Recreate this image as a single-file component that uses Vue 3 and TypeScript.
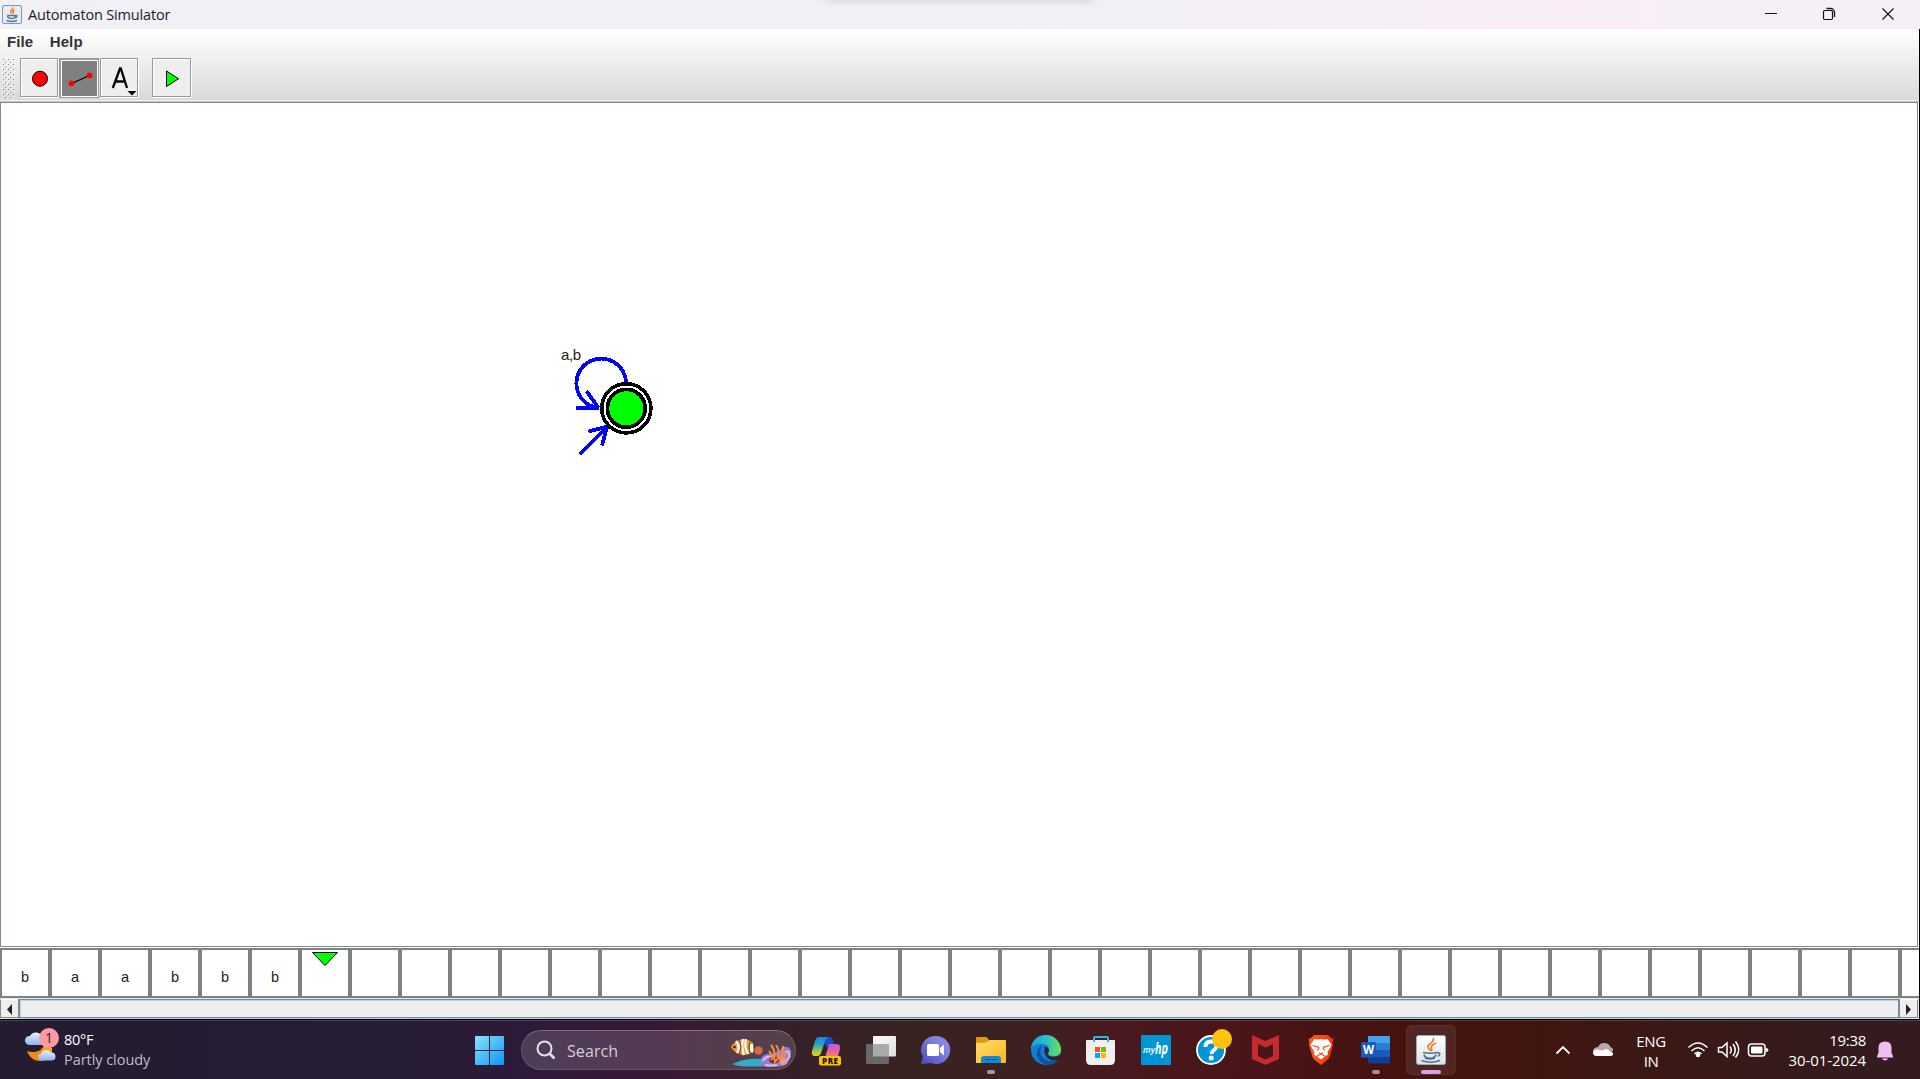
<script setup lang="ts">
interface TapeCell {
  symbol: string
  head: boolean
}

const input = ['b', 'a', 'a', 'b', 'b', 'b']
const headIndex = 6
const tape: TapeCell[] = Array.from({ length: 39 }, (_, i) => ({
  symbol: input[i] ?? '',
  head: i === headIndex,
}))
</script>

<template>
  <div class="screen">
    <header class="titlebar">
      <svg class="app-icon" width="22" height="22" viewBox="1 3 22 22">
        <rect x="2.5" y="4.5" width="19" height="18" rx="1.5" fill="#e6ecf2" stroke="#8097ab" />
        <path d="M12.500 6.500c2 2-4 3-1 6M14.500 9c-2 1-2 2-1 4" fill="none" stroke="#e8853a" stroke-width="1.500" />
        <path d="M7.500 14.500h8c0 4-8 4-8 0M15.500 14.500q3 0 0 2.500M6.500 19.500q5 2 10.500 0" fill="none" stroke="#557896" stroke-width="1.400" />
      </svg>
      <span class="title">Automaton Simulator</span>
      <div class="notch"></div>
      <svg class="win-controls" width="155" height="29" viewBox="1765 0 155 29" fill="none" stroke="#151515">
        <path d="M1765 13.500h12" />
        <path d="M1826.500 8.500h4a4 4 0 0 1 4 4v4.500" stroke-width="1.300" />
        <rect x="1823.500" y="10.500" width="9" height="9" rx="1.200" stroke-width="1.200" />
        <path d="M1882.500 8.500l11 11M1893.500 8.500l-11 11" stroke-width="1.200" />
      </svg>
    </header>

    <div class="app">
      <div class="chrome">
        <nav class="menu"><span>File</span><span>Help</span></nav>
        <div class="toolbar">
          <svg class="grip" width="13" height="41" shape-rendering="crispEdges">
            <defs>
              <pattern id="bumps" width="5" height="5" patternUnits="userSpaceOnUse">
                <path d="M0 0h1v1H0zM2 3h1v1H2z" fill="#fff" />
                <path d="M1 1h1v1H1zM3 4h1v1H3z" fill="#7f909f" />
              </pattern>
            </defs>
            <rect width="13" height="41" fill="url(#bumps)" />
          </svg>
          <button class="tool">
            <svg width="36" height="37" viewBox="21 59 36 37"><circle cx="40" cy="78.700" r="7.500" fill="#f00" stroke="#000" /></svg>
          </button>
          <button class="tool selected">
            <svg width="37" height="37" viewBox="61 60 37 37">
              <path d="M71.500 83.500L89.500 75.500" stroke="#000" stroke-width="1.300" />
              <circle cx="71.500" cy="83.300" r="2.900" fill="#f00" /><circle cx="89.500" cy="75.300" r="2.900" fill="#f00" />
            </svg>
          </button>
          <button class="tool text-tool">
            <svg width="36" height="37" viewBox="101 59 36 37">
              <path d="M112.800 88L120 68.500h.8L127 88M115.300 81.500h9.500" fill="none" stroke="#000" stroke-width="2.300" />
              <path d="M127.500 91h9l-4.500 4.500z" />
            </svg>
          </button>
          <button class="tool run">
            <svg width="37" height="37" viewBox="153 59 37 37"><path d="M166.500 71v15.500l12-7.700z" fill="#0f0" stroke="#000" /></svg>
          </button>
        </div>
      </div>

      <main class="canvas">
        <svg width="1916" height="844" viewBox="1 103 1916 844" shape-rendering="crispEdges">
          <g fill="none" stroke="#00f" stroke-width="3.800">
            <path d="M626 384A24.800 24.800 0 1 0 589 405L597 408.500" />
            <path d="M576 408.300h23M586.500 391L598.500 408" />
            <path d="M579.500 454.500L607 427M588.500 431.500L607.500 426.500M602 445.500L607 427" />
          </g>
          <circle cx="626.300" cy="408.300" r="24.600" fill="#fff" stroke="#000" stroke-width="3.600" />
          <circle cx="626.300" cy="408.300" r="18.900" fill="#0f0" stroke="#000" stroke-width="3.800" />
          <text x="561" y="360" font-size="15" fill="#222" textLength="20">a,b</text>
        </svg>
      </main>

      <div class="tape">
        <div v-for="(cell, i) in tape" :key="i" class="cell">
          <svg v-if="cell.head" width="26" height="15" viewBox="0 0 26 15"><path d="M.5 .5h25L13 13.500z" fill="#0f0" stroke="#000" /></svg>
          <span v-else>{{ cell.symbol }}</span>
        </div>
      </div>

      <div class="scrollbar">
        <div class="arrow left"><svg width="5" height="11"><path d="M5 0v11L0 5.500z" fill="#222" /></svg></div>
        <div class="thumb"></div>
        <div class="arrow right"><svg width="5" height="11"><path d="M0 0v11L5 5.500z" fill="#222" /></svg></div>
      </div>
    </div>

    <footer class="taskbar">
      <div class="weather">
        <svg width="40" height="40" viewBox="22 1025 40 40">
          <defs><linearGradient id="cloud" x2="0" y2="1"><stop stop-color="#e9f2ff" /><stop offset="1" stop-color="#8fb2ee" /></linearGradient></defs>
          <path d="M27 1051c6 2 13 1 15-3l8-1c5 4 0 14-10 14-6 0-11-4-13-10z" fill="#f08a1c" />
          <path d="M44 1044l8 4v4h-10z" fill="#f6a623" />
          <path d="M29 1045a4.500 4.500 0 0 1 1-9 6.500 6.500 0 0 1 12 1v8z" fill="url(#cloud)" />
          <path d="M41 1060.500a3.600 3.600 0 0 1 0-7 6 6 0 0 1 10-1 4 4 0 0 1 1 8z" fill="url(#cloud)" />
          <circle cx="49" cy="1038" r="10" fill="#fe99a4" />
          <text x="49" y="1043" text-anchor="middle" font-size="14" fill="#3a2028">1</text>
        </svg>
        <div class="weather-text"><span class="temp">80°F</span><span class="sky">Partly cloudy</span></div>
      </div>

      <svg class="start" width="30" height="30" viewBox="0 0 30 30">
        <defs><linearGradient id="win" x2="1" y2="1"><stop stop-color="#8be3fb" /><stop offset="1" stop-color="#0a96f5" /></linearGradient></defs>
        <path d="M1 0h13v14H0V1a1 1 0 0 1 1-1zM15 0h13a1 1 0 0 1 1 1v13H15zM0 15h14v14H1a1 1 0 0 1-1-1zM15 15h14v13a1 1 0 0 1-1 1H15z" fill="url(#win)" />
      </svg>

      <div class="search">
        <svg width="20" height="20" viewBox="0 0 20 20" fill="none" stroke="#e8e0e8" stroke-width="2"><circle cx="8.500" cy="8.500" r="7" /><path d="M13.500 13.500l5 5" stroke-width="2.500" /></svg>
        <span>Search</span>
        <svg class="reef" width="62" height="32" viewBox="730 1036 62 32">
          <path d="M732.500 1064c9-5 21-6 32-5v7.500h-20c-5 0-9-1-12-2.500z" fill="#36aacb" />
          <path d="M731 1047c4-8 15-10 22-4l1 8c-7 6-18 5-23-4z" fill="#f59a1d" />
          <path d="M736 1041q5 6 1 12M743 1039q-2 8 1 16M746 1039q-2 8 2 15" stroke="#f5f1ed" stroke-width="2.500" fill="none" />
          <path d="M739 1040q4 7 0 14M750 1042q-2 5 0 11" stroke="#4b3d45" stroke-width="1" fill="none" />
          <circle cx="734.500" cy="1047" r="1.300" fill="#222" />
          <path d="M750 1044l3 0v9l-3-2z" fill="#fff" />
          <circle cx="758.500" cy="1050.500" r="4" fill="#f0671d" stroke="#6f6d82" stroke-width="1.200" />
          <path d="M762 1065c-4-7 2-12 10-11l8-4c3-5 10-4 11 1 1 8-5 15.500-12 15.500h-12q-4 0-5-1.500z" fill="#9a7ace" />
          <path d="M763 1061q3-6 10-4M785 1052q5-2 4 4M786 1061l4-5M765 1065q5 1 12 0" stroke="#d9bdf2" stroke-width="2" fill="none" />
          <path d="M774 1060q-1-5-5-9M774 1060q2-9-3-15M777 1060q4-8-1-15M778 1060q6-5 5-14M779 1060q6-2 7-8" stroke="#f59042" stroke-width="2" fill="none" />
          <ellipse cx="774" cy="1060" rx="5" ry="3.500" fill="#6b3043" /><path d="M771 1060l3-4 1 6 4-5" stroke="#ff8b2c" stroke-width="2" fill="none" />
          <ellipse cx="784" cy="1062" rx="4" ry="3" fill="#e49aa8" transform="rotate(-30 784 1062)" />
        </svg>
      </div>

      <div class="apps">
        <svg viewBox="799 1020 55 59">
          <defs>
            <linearGradient id="copA" x2="0" y2="1"><stop stop-color="#1584e6" /><stop offset=".4" stop-color="#27a5c2" /><stop offset=".7" stop-color="#8ec64c" /><stop offset="1" stop-color="#f2cf20" /></linearGradient>
            <linearGradient id="copB" x2="0" y2="1"><stop stop-color="#b35ff0" /><stop offset=".5" stop-color="#ed5f9f" /><stop offset="1" stop-color="#fb8a52" /></linearGradient>
          </defs>
          <path d="M821 1037h8q3 0 4 4l1 3q-5-1-7 4z" fill="#1c50c8" />
          <path d="M819 1037h9q-3 2-4 7l-3 9q-1 3-4 3h-2q-4 0-3-5l3-10q1-4 4-4z" fill="url(#copA)" />
          <path d="M829 1044h7q5 0 4 5l-2 7-13 2z" fill="url(#copB)" />
          <rect x="819" y="1056" width="22" height="9.500" rx="2" fill="#fdc400" />
          <text x="822" y="1063.800" font-size="8" font-weight="800" fill="#241800" textLength="16">PRE</text>
        </svg>
        <svg viewBox="854 1020 55 59">
          <defs><linearGradient id="tv" x2="1" y2="1"><stop stop-color="#fff" /><stop offset="1" stop-color="#ddd" /></linearGradient></defs>
          <rect x="873" y="1036" width="23" height="20.500" rx="1" fill="url(#tv)" />
          <rect x="866" y="1044" width="23" height="20" rx="1" fill="#696969" />
          <path d="M873 1044h16v12.500h-16z" fill="#aaa" />
        </svg>
        <svg viewBox="909 1020 55 59">
          <defs><linearGradient id="chat" x1="1" x2="0" y2="1"><stop stop-color="#9887e4" /><stop offset=".35" stop-color="#7d83dc" /><stop offset="1" stop-color="#4a48be" /></linearGradient></defs>
          <path d="M936 1036a14 14 0 1 1-5 27l-9 1q-1 0-1-1l2-6a14 14 0 0 1 13-21z" fill="url(#chat)" />
          <rect x="927" y="1044" width="12" height="12" rx="1.500" fill="#fff" /><path d="M940 1048l4-3.500v11l-4-3.500z" fill="#fff" />
        </svg>
        <svg viewBox="964 1020 55 59">
          <defs><linearGradient id="fold" x2="1" y2="1"><stop stop-color="#ffdc6b" /><stop offset="1" stop-color="#f9b91c" /></linearGradient></defs>
          <path d="M976 1038q0-1 1-1h9q1 0 3 3h8v5h-21z" fill="#dd9b0c" />
          <path d="M976 1043l10-.5 4-2.500h15q1 0 1 1v21q0 1-1 1h-29z" fill="url(#fold)" />
          <path d="M981 1063v-4q0-3 3-3h14q3 0 3 3v4z" fill="#1787d4" /><path d="M985 1059.500h12" stroke="#0a5ca5" />
          <rect x="987" y="1070" width="8" height="4" rx="2" fill="#a39998" />
        </svg>
        <svg viewBox="1019 1020 55 59">
          <defs>
            <linearGradient id="edgeA" x2="1"><stop stop-color="#1c9fdd" /><stop offset=".5" stop-color="#29bfc7" /><stop offset="1" stop-color="#6ce050" /></linearGradient>
            <linearGradient id="edgeB" x2="0" y2="1"><stop stop-color="#1485d8" /><stop offset="1" stop-color="#0b78d8" /></linearGradient>
          </defs>
          <circle cx="1046" cy="1050" r="15" fill="url(#edgeB)" />
          <path d="M1031 1049c1-18 26-19 30-1 1 9-9 10-13 6 3-6 0-10-5-10-7-1-10 2-12 5z" fill="url(#edgeA)" />
          <path d="M1043 1045c-6 7-1 16 8 16 4 0 6-1 8-2-4 6-11 7-15 5-10-5-9-17-1-19z" fill="#10549f" />
          <path d="M1043 1047.500c2-2 6 0 6 3-1 3-2 5 2 6 4 1 8-1 9-2l2 3-3 2c-9 4-17-5-14-12z" fill="#3a2022" />
        </svg>
        <svg viewBox="1074 1020 55 59">
          <path d="M1094 1042v-4q0-1 1-1h12q1 0 1 1v4" fill="none" stroke="#2bb8e8" stroke-width="2" />
          <path d="M1086 1041q0-1 1-1h27q1 0 1 1v19q0 5-5 5h-19q-5 0-5-5z" fill="#efefef" />
          <path d="M1094 1039v3M1108 1039v3" stroke="#2bb8e8" stroke-width="2" />
          <path d="M1095 1047h5v5h-5z" fill="#f05124" /><path d="M1101 1047h5v5h-5z" fill="#7fba00" /><path d="M1095 1053h5v5h-5z" fill="#05a5f0" /><path d="M1101 1053h5v5h-5z" fill="#ffb902" />
        </svg>
        <svg viewBox="1129 1020 55 59">
          <rect x="1141" y="1035" width="30" height="30" rx="1" fill="#0096d6" />
          <text x="1143" y="1053" font-size="9.500" font-style="italic" font-weight="600" fill="#fff" textLength="12" lengthAdjust="spacingAndGlyphs">my</text>
          <text x="1155" y="1054" font-size="16" font-style="italic" font-weight="700" fill="#fff" textLength="13" lengthAdjust="spacingAndGlyphs">hp</text>
        </svg>
        <svg viewBox="1184 1020 55 59">
          <circle cx="1211" cy="1050" r="14" fill="#0096d6" stroke="#fff" stroke-width="1.800" />
          <path d="M1205.500 1047q0-5.500 5.500-5.500t5.500 4.500c0 4-5 4-5 8" fill="none" stroke="#fff" stroke-width="3.800" /><circle cx="1211.200" cy="1058" r="2.500" fill="#fff" />
          <circle cx="1222" cy="1039" r="10" fill="#ffc20e" />
        </svg>
        <svg viewBox="1239 1020 55 59">
          <path d="M1252 1035l13.500 6 13.500-6v24l-13.500 6-13.500-6zM1258 1044v12l7.500 3.500 7.500-3.500v-12l-7.500 3.500z" fill="#c32b2c" fill-rule="evenodd" />
        </svg>
        <svg viewBox="1294 1020 55 59">
          <defs><linearGradient id="brave" x2="1"><stop stop-color="#ff5b22" /><stop offset="1" stop-color="#f4340a" /></linearGradient></defs>
          <path d="M1314 1035h14l3 3 2.500 1-1 4 .5 2-3.500 12q-1 2-3 3.500l-5.500 4.500-5.500-4.500q-2-1.500-3-3.500l-3.500-12 .5-2-1-4 2.500-1z" fill="url(#brave)" />
          <path d="M1314.500 1039l3 .5 3.500-.5 3.500.5 3-.5 4 5.500-1.500 3.500-2.500 4 .5 2.500-3 2-4 3-4-3-3-2 .5-2.500-2.500-4-1.500-3.500z" fill="#fff" />
          <path d="M1312.500 1045.500l5 1.300 1.500 1.200-1.500 2.500M1329.500 1045.500l-5 1.300-1.500 1.200 1.500 2.500M1319 1053l2 1 2-1M1316.500 1056.500l4.500-2.500 4.500 2.500" fill="none" stroke="#fa481a" stroke-width="1.200" />
        </svg>
        <svg viewBox="1349 1020 55 59">
          <path d="M1369 1036h20q1 0 1 1v6.500h-22v-6.500q0-1 1-1z" fill="#41a5ee" /><path d="M1368 1043h22v7h-22z" fill="#2b7cd3" /><path d="M1368 1050h22v7h-22z" fill="#185abd" /><path d="M1368 1057h22v5.500q0 1-1 1h-20q-1 0-1-1z" fill="#103f91" />
          <rect x="1361" y="1042" width="15" height="15.500" rx="1.200" fill="#185abd" />
          <text x="1368.500" y="1054" text-anchor="middle" font-size="11.500" font-weight="700" fill="#fff">W</text>
          <rect x="1372" y="1070" width="8" height="4" rx="2" fill="#a98f8e" />
        </svg>
        <svg viewBox="1404 1020 55 59">
          <rect x="1406.500" y="1025.500" width="49" height="49" rx="5" fill="#fff" fill-opacity=".08" stroke="#fff" stroke-opacity=".08" />
          <defs><linearGradient id="jbg" x2="0" y2="1"><stop stop-color="#fdfefe" /><stop offset="1" stop-color="#dfe3e6" /></linearGradient></defs>
          <rect x="1416.500" y="1035.500" width="29" height="29" rx="2" fill="url(#jbg)" stroke="#9aacbc" />
          <path d="M1433 1038c3 4-6 6-5 9q0 2 3 4M1436 1043c-5 2-6 4-4 8" fill="none" stroke="#e8802d" stroke-width="1.700" />
          <path d="M1423 1052.500q8 1.500 14 0M1424 1054.500c1 5 11 5 12 0M1437 1052.500q5 0 1 4M1425 1058q5 2 10 0M1421.500 1060.500q9 3.500 18.500 0" fill="none" stroke="#4f7391" stroke-width="1.600" />
          <rect x="1421" y="1070" width="20" height="4" rx="2" fill="#dd9ee4" />
        </svg>
      </div>

      <svg class="tray" width="70" height="59" viewBox="1550 1020 70 59">
        <path d="M1556.500 1053.500l6.500-6.500 6.500 6.500" fill="none" stroke="#fff" stroke-width="1.800" />
        <path d="M1596 1056q-3-1-3-4.500 0-4 5-4.500 2-4 6-4 5 0 6.500 4 3 1 2.500 4z" fill="#b7a9a8" />
        <path d="M1596 1056q-3-1-3-3.500 1-3 4-3l6 1q2-2 5-1 1 1 2 2 3 0 3 2.500t-3 2z" fill="#fff" />
      </svg>
      <div class="lang"><span>ENG</span><span>IN</span></div>
      <svg class="status" width="84" height="59" viewBox="1686 1020 84 59" fill="none" stroke="#fff" stroke-width="1.500">
        <path d="M1688.500 1047.500q9.500-9 19 0M1691.500 1051q6.500-6.500 13 0M1694.500 1054q3.500-3.500 7 0" /><circle cx="1698" cy="1055" r="1.500" fill="#fff" />
        <path d="M1718.500 1047.500h3.500l5-4.500v13.500l-5-4.500h-3.500zM1730 1046.500q2.500 3.500 0 7M1733 1044q4.500 6 0 12M1735.500 1041.500q6.500 8 0 16" />
        <rect x="1748.500" y="1044" width="16.500" height="12" rx="3" /><rect x="1751" y="1046.500" width="11.500" height="7" rx="1" fill="#fff" stroke="none" /><path d="M1766 1048.500q2 0 2 1.500t-2 1.500z" fill="#fff" stroke-width="1" />
      </svg>
      <div class="clock"><span class="time">19:38</span><span>30-01-2024</span></div>
      <svg class="bell" width="18" height="20" viewBox="1876 1041 18 20"><path d="M1885 1041.500q6.500 0 6.500 6v5l1.500 4v1h-16v-1l1.500-4v-5q0-6 6.500-6z" fill="#efbdf2" /><path d="M1882 1058.500h6q-.5 2-3 2t-3-2z" fill="#efbdf2" /></svg>
    </footer>
  </div>
</template>

<style>
body { margin: 0; overflow: hidden; }
</style>

<style scoped>
.screen { width: 1920px; height: 1079px; display: flex; flex-direction: column; overflow: hidden; font-family: "Open Sans", "Noto Sans", sans-serif; }
.screen * { box-sizing: border-box; }
svg { display: block; flex: none; }
.titlebar { height: 29px; flex: none; display: flex; align-items: center; background: linear-gradient(90deg, #f1f0f7 0, #f2eff6 55%, #f5eef6 72%, #faedf5 82%, #f6eff7 88%, #f5eff7 100%); position: relative; }
.app-icon { margin-left: 1px; }
.title { margin-left: 5px; font-size: 14.5px; letter-spacing: -.17px; color: #1c1c1c; white-space: nowrap; line-height: 20px; }
.notch { position: absolute; left: 826px; top: -12px; width: 268px; height: 10px; border-radius: 5px; box-shadow: 0 2px 9px rgba(60, 50, 70, .2); }
.win-controls { margin-left: auto; }
.app { height: 991px; flex: none; display: flex; flex-direction: column; border-right: 1px solid #000; border-bottom: 1px solid #000; background: #fff; }
.chrome { height: 73px; flex: none; background: linear-gradient(#fff, #dadada 71px, #eee 71px, #eee 72px, #c6c8ca 72px); }
.menu { display: flex; height: 26px; padding: 5px 0 0 7px; gap: 16.500px; font: bold 15px/16px "Liberation Sans", Arial, sans-serif; color: #333; letter-spacing: .1px; }
.toolbar { display: flex; align-items: flex-start; height: 45px; padding: 3px 0 0 2px; }
.grip { margin-right: 5px; }
.tool { width: 38px; height: 39px; padding: 0; border: 1px solid #999; background: #eee; box-shadow: inset 1px 1px #fff, 1px 1px #fff; display: flex; flex: none; }
.selected { width: 40px; height: 40px; margin-left: 1px; background: #808080; border-width: 2px 1px 1px 2px; box-shadow: inset 1px 1px #fff, inset -1px -1px #fff; }
.text-tool { margin-left: 1px; }
.run { margin-left: 14px; width: 39px; }
.canvas { height: 845px; flex: none; width: 1918px; border: 1px solid #7a8a99; background: #fff; overflow: hidden; font-family: "Liberation Sans", Arial, sans-serif; }
.tape { margin-top: 1px; height: 50px; flex: none; display: flex; gap: 4px; padding: 2px 0 2px 2px; background: #808080; overflow: hidden; }
.cell { width: 46px; height: 46px; flex: none; background: #fff; display: flex; justify-content: center; align-items: flex-start; padding-top: 2px; font: 14.500px/16px "Liberation Sans", Arial, sans-serif; color: #222; }
.cell span { margin-top: 17px; }
.scrollbar { height: 21px; flex: none; display: flex; padding-top: 1px; background: #e5e9ed; }
.arrow { height: 19px; display: flex; align-items: center; padding-top: 2px; border-bottom: 1px solid #7a8a99; border-top: 1px solid #fff; background: #eee; flex: none; }
.left { width: 18px; border-left: 1px solid #7a8a99; padding-left: 6px; }
.right { width: 18px; border-right: 1px solid #7a8a99; padding-left: 6px; }
.thumb { width: 1882px; height: 19px; background: #eee; border: 1px solid #7a8a99; border-left-width: 2px; border-right-width: 2px; box-shadow: inset 1px 1px #b8cfe5, 0 1px #b8cfe5; flex: none; }
.taskbar { height: 59px; flex: none; display: flex; border-top: 1px solid rgba(255, 255, 255, .17); background: linear-gradient(90deg, #241c31 0, #261c34 400px, #301a3a 540px, #391934 680px, #35202a 790px, #382321 900px, #3b2222 1000px, #48191e 1120px, #4a1519 1250px, #451311 1370px, #41150f 1540px, #391916 1690px, #351b1c 1820px, #331b20 1920px); color: #fff; }
.taskbar > svg.tray, .taskbar > svg.status, .apps { margin-top: -1px; }
.weather { width: 475px; padding-left: 22px; display: flex; flex: none; }
.weather > svg { margin-top: 4px; }
.weather-text { display: flex; flex-direction: column; margin: 9px 0 0 2px; font-size: 14.5px; line-height: 20px; white-space: nowrap; }
.temp { letter-spacing: -.3px; }
.sky { color: #c0bcc5; letter-spacing: -.05px; }
.start { margin-top: 15px; }
.search { width: 275px; height: 40px; margin: 9px 0 0 16px; padding: 0 3px 0 14px; border-radius: 20px; border: 1px solid rgba(255, 255, 255, .13); border-top-color: rgba(255, 255, 255, .25); background: rgba(255, 255, 255, .15); display: flex; align-items: center; flex: none; font-size: 16px; color: #d9ced8; letter-spacing: .1px; }
.search span { margin: 1px 0 0 11px; }
.reef { margin: 4px 0 0 auto; }
.apps { display: flex; margin-left: 3px; flex: none; }
.apps svg { width: 55px; height: 59px; }
.tray { margin-left: 91px; }
.lang { width: 62px; margin-top: 10px; display: flex; flex-direction: column; align-items: center; font-size: 15px; line-height: 20px; letter-spacing: -.4px; }
.status { margin-left: 4px; }
.clock { width: 96px; margin-top: 9px; display: flex; flex-direction: column; align-items: flex-end; font-size: 15px; line-height: 20px; letter-spacing: -.07px; flex: none; }
.time { letter-spacing: -.3px; }
.bell { margin: 20px 0 0 10px; }
</style>
